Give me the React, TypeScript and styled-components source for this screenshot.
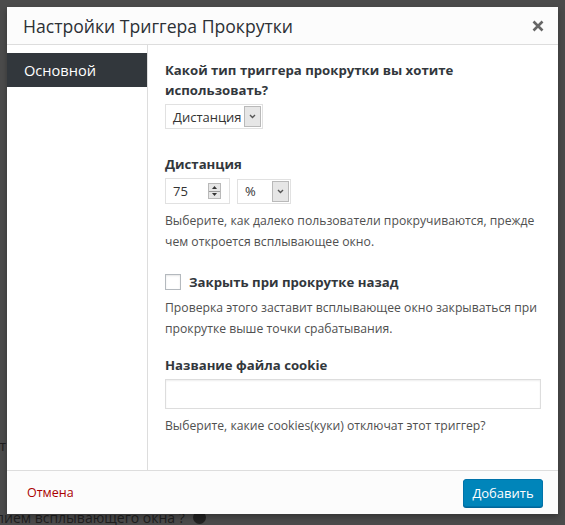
import React from 'react'
import styled, { createGlobalStyle } from 'styled-components'

const GlobalStyle = createGlobalStyle`
  html, body {
    margin: 0;
    padding: 0;
    background: #4b4b4b;
  }
  * {
    box-sizing: border-box;
  }
`

const fontStack = `"Open Sans", "Noto Sans", "DejaVu Sans", sans-serif`

const Backdrop = styled.div`
  position: relative;
  width: 565px;
  height: 525px;
  overflow: hidden;
  background: #4b4b4b;
  padding: 7px 7px 0 7px;
  font-family: ${fontStack};
`

const BehindPage = styled.div`
  position: absolute;
  inset: 0;
  color: #1f1f1f;
  font-size: 14px;
`

const BehindLine = styled.div<{ top: number; left: number }>`
  position: absolute;
  top: ${({ top }) => top}px;
  left: ${({ left }) => left}px;
  display: flex;
  align-items: center;
  gap: 8px;
  white-space: nowrap;
`

const HelpDot = styled.span`
  width: 13px;
  height: 13px;
  border-radius: 50%;
  background: #222;
`

const Modal = styled.div`
  position: relative;
  width: 551px;
  height: 507px;
  background: #fff;
  display: flex;
  flex-direction: column;
  box-shadow: 0 3px 6px rgba(0, 0, 0, 0.3);
`

const Header = styled.div`
  height: 38px;
  flex: none;
  display: flex;
  align-items: center;
  justify-content: space-between;
  padding: 0 12px 0 16px;
  background: #fcfcfc;
  border-bottom: 1px solid #ddd;
`

const Title = styled.h1`
  margin: 0;
  font-size: 17.6px;
  font-weight: 400;
  color: #2c3035;
`

const CloseButton = styled.button`
  border: 0;
  background: none;
  padding: 0;
  width: 16px;
  height: 16px;
  display: flex;
  align-items: center;
  justify-content: center;
  cursor: pointer;
`

const Body = styled.div`
  flex: 1;
  display: flex;
  min-height: 0;
`

const Sidebar = styled.nav`
  width: 141px;
  flex: none;
  padding-top: 8px;
  border-right: 1px solid #ddd;
  background: #fff;
`

const Tab = styled.div<{ active?: boolean }>`
  height: 34px;
  display: flex;
  align-items: center;
  padding-left: 17px;
  font-size: 14.6px;
  color: ${({ active }) => (active ? '#fff' : '#0073aa')};
  background: ${({ active }) => (active ? '#32373c' : 'transparent')};
`

const Content = styled.div`
  flex: 1;
  padding: 15px 17px 0 17px;
  color: #444;
`

const Field = styled.div<{ gap?: number }>`
  margin-bottom: ${({ gap }) => gap ?? 0}px;
`

const Label = styled.div`
  font-size: 13.2px;
  font-weight: 700;
  line-height: 20px;
  color: #32373c;
  margin-bottom: 4px;
`

const Description = styled.p`
  margin: 6px -8px 0 0;
  font-size: 12.2px;
  line-height: 21px;
  color: #505050;
`

const Row = styled.div`
  display: flex;
  gap: 7px;
  align-items: center;
`

const SelectBox = styled.div<{ width: number }>`
  width: ${({ width }) => width}px;
  height: 25px;
  display: flex;
  align-items: stretch;
  border: 1px solid #e1e1e1;
  background: #fff;
  padding: 1px 1px 1px 0;
`

const SelectText = styled.span`
  flex: 1;
  display: flex;
  align-items: center;
  padding-left: 7px;
  font-size: 13px;
  color: #333;
`

const ArrowBox = styled.span`
  width: 17px;
  display: flex;
  align-items: center;
  justify-content: center;
  background: #e6e6e6;
  border: 1px solid #b9b9b9;
`

const NumberBox = styled.div`
  width: 65px;
  height: 26px;
  display: flex;
  align-items: center;
  justify-content: space-between;
  border: 1px solid #e1e1e1;
  background: #fff;
  padding: 0 8px 0 7px;
  font-size: 13px;
  color: #333;
`

const Spinner = styled.span`
  width: 13px;
  height: 16px;
  display: flex;
  flex-direction: column;
  border: 1px solid #b9b9b9;
  background: #e6e6e6;
`

const SpinHalf = styled.span<{ down?: boolean }>`
  flex: 1;
  display: flex;
  align-items: center;
  justify-content: center;
  border-top: ${({ down }) => (down ? '1px solid #9a9a9a' : '0')};
`

const CheckRow = styled.label`
  display: flex;
  align-items: center;
  gap: 8px;
  font-size: 13.2px;
  font-weight: 700;
  color: #32373c;
`

const CheckBox = styled.span`
  width: 16px;
  height: 16px;
  border: 1px solid #b4b9be;
  background: #fff;
  box-shadow: inset 0 1px 2px rgba(0, 0, 0, 0.1);
`

const TextInput = styled.div`
  width: 100%;
  height: 30px;
  border: 1px solid #ddd;
  background: #fff;
  box-shadow: inset 0 1px 2px rgba(0, 0, 0, 0.07);
`

const Footer = styled.div`
  height: 44px;
  flex: none;
  display: flex;
  align-items: center;
  justify-content: space-between;
  padding: 0 15px 0 20px;
  background: #fcfcfc;
  border-top: 1px solid #ddd;
`

const CancelLink = styled.a`
  font-size: 12.5px;
  color: #a00;
  text-decoration: none;
`

const PrimaryButton = styled.button`
  width: 80px;
  height: 28px;
  border: 1px solid #0073aa;
  border-radius: 3px;
  background: #0085ba;
  color: #fff;
  font-family: ${fontStack};
  font-size: 13px;
  box-shadow: 0 1px 0 #006799;
`

const Chevron = () => (
  <svg width="7" height="5" viewBox="0 0 7 5">
    <path d="M1 1 L3.5 3.5 L6 1" fill="none" stroke="#555" strokeWidth="1.4" />
  </svg>
)

const Tri = ({ down }: { down?: boolean }) => (
  <svg width="5" height="3" viewBox="0 0 5 3">
    <path d={down ? 'M0 0 H5 L2.5 3 Z' : 'M0 3 H5 L2.5 0 Z'} fill="#333" />
  </svg>
)

const Select = ({ value, width }: { value: string; width: number }) => (
  <SelectBox width={width}>
    <SelectText>{value}</SelectText>
    <ArrowBox>
      <Chevron />
    </ArrowBox>
  </SelectBox>
)

export default function App() {
  return (
    <>
      <GlobalStyle />
      <Backdrop>
        <BehindPage>
          <BehindLine top={436} left={-12}>
            ют
          </BehindLine>
          <BehindLine top={508} left={-4}>
            лием всплывающего окна ?<HelpDot />
          </BehindLine>
        </BehindPage>
        <Modal>
          <Header>
            <Title>Настройки Триггера Прокрутки</Title>
            <CloseButton aria-label="Закрыть">
              <svg width="12" height="12" viewBox="0 0 12 12">
                <path d="M1.5 1.5 L10.5 10.5 M10.5 1.5 L1.5 10.5" stroke="#666" strokeWidth="2.6" />
              </svg>
            </CloseButton>
          </Header>
          <Body>
            <Sidebar>
              <Tab active>Основной</Tab>
            </Sidebar>
            <Content>
              <Field gap={25}>
                <Label>Какой тип триггера прокрутки вы хотите использовать?</Label>
                <Select value="Дистанция" width={98} />
              </Field>
              <Field gap={21}>
                <Label>Дистанция</Label>
                <Row>
                  <NumberBox>
                    75
                    <Spinner>
                      <SpinHalf>
                        <Tri />
                      </SpinHalf>
                      <SpinHalf down>
                        <Tri down />
                      </SpinHalf>
                    </Spinner>
                  </NumberBox>
                  <Select value="%" width={54} />
                </Row>
                <Description>
                  Выберите, как далеко пользователи прокручиваются, прежде чем откроется всплывающее окно.
                </Description>
              </Field>
              <Field gap={16}>
                <CheckRow>
                  <CheckBox />
                  Закрыть при прокрутке назад
                </CheckRow>
                <Description>
                  Проверка этого заставит всплывающее окно закрываться при прокрутке выше точки срабатывания.
                </Description>
              </Field>
              <Field>
                <Label>Название файла cookie</Label>
                <TextInput />
                <Description>Выберите, какие cookies(куки) отключат этот триггер?</Description>
              </Field>
            </Content>
          </Body>
          <Footer>
            <CancelLink href="#">Отмена</CancelLink>
            <PrimaryButton>Добавить</PrimaryButton>
          </Footer>
        </Modal>
      </Backdrop>
    </>
  )
}
